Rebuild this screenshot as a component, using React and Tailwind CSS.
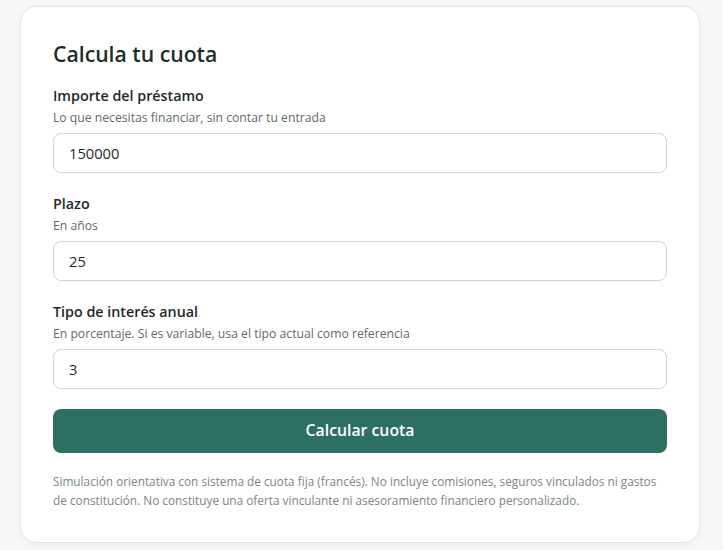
export default function App() {
  const fields = [
    { label: "Importe del préstamo", help: "Lo que necesitas financiar, sin contar tu entrada", value: "150000" },
    { label: "Plazo", help: "En años", value: "25" },
    { label: "Tipo de interés anual", help: "En porcentaje. Si es variable, usa el tipo actual como referencia", value: "3" },
  ];
  return (
    <div className="min-h-[550px] bg-[#f7f8f8] pt-[6px]" style={{ fontFamily: '"Open Sans", "Noto Sans", sans-serif' }}>
      <div className="ml-[20px] w-[680px] rounded-[16px] border border-[#e1e7e5] bg-white px-[32px] pt-[32px] pb-[32px] shadow-[0_2px_8px_rgba(0,0,0,0.04)]">
        <h2 className="text-[21.2px] leading-[30px] font-semibold text-[#1d2e2a] mb-[17px]">Calcula tu cuota</h2>
        <div className="flex flex-col gap-[21px]">
          {fields.map((f) => (
            <div key={f.label} className="flex flex-col">
              <label className="text-[14.3px] leading-[20px] font-semibold text-[#1f2a28]">{f.label}</label>
              <span className="text-[12.2px] leading-[18px] text-[#5f6b68] mt-[3px] mb-[6px]">{f.help}</span>
              <input
                readOnly
                value={f.value}
                className="h-[40px] rounded-[8px] border border-[#cdd6d3] bg-white px-[15px] text-[14.7px] text-[#1f2a28] outline-none"
                style={{ fontFamily: '"Open Sans", "Noto Sans", sans-serif' }}
              />
            </div>
          ))}
        </div>
        <button
          className="mt-[20px] w-full h-[44px] rounded-[8px] bg-[#2e6f63] text-white text-[15.8px] font-semibold"
          style={{ fontFamily: '"Open Sans", "Noto Sans", sans-serif' }}
        >
          Calcular cuota
        </button>
        <p className="mt-[19px] text-[11.8px] leading-[19px] text-[#7b8683]">
          Simulación orientativa con sistema de cuota fija (francés). No incluye comisiones, seguros vinculados ni gastos de constitución. No constituye una oferta vinculante ni asesoramiento financiero personalizado.
        </p>
      </div>
    </div>
  );
}
